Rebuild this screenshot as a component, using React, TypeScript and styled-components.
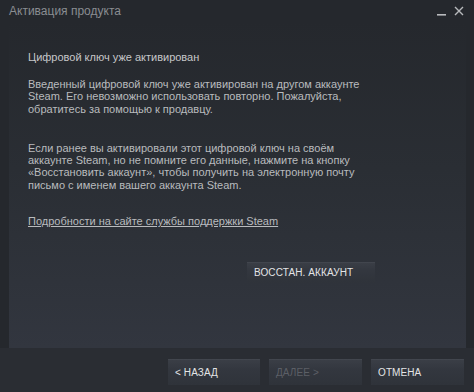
import React from "react";
import styled, { createGlobalStyle } from "styled-components";

const Global = createGlobalStyle`
  html, body { margin: 0; padding: 0; background: #24272c; }
  body { font-family: "Liberation Sans", Arial, sans-serif; }
`;

const Window = styled.div`
  width: 474px;
  height: 392px;
  display: flex;
  flex-direction: column;
  background: #25282d;
  overflow: hidden;
`;

const TitleBar = styled.div`
  height: 22px;
  display: flex;
  align-items: center;
  justify-content: space-between;
  padding: 0 10px 0 9px;
`;

const Title = styled.div`
  font-size: 12px;
  color: #8a8d92;
`;

const WinControls = styled.div`
  display: flex;
  align-items: center;
  gap: 7px;
  color: #b8babd;
`;

const Panel = styled.div`
  margin: 0 8px 0 9px;
  height: 326px;
  box-sizing: border-box;
  padding: 29px 19px 0 19px;
  background: linear-gradient(180deg, #25282d 0%, #2a2e34 45%, #32363f 100%);
  display: flex;
  flex-direction: column;
`;

const Heading = styled.div`
  font-size: 11px;
  line-height: 12px;
  color: #c6c7c9;
  margin-bottom: 15px;
`;

const Para = styled.p<{ $gap?: number }>`
  margin: 0 0 ${(p) => p.$gap ?? 0}px 0;
  font-size: 11px;
  line-height: 12.3px;
  color: #b9bbbe;
`;

const Link = styled.a`
  font-size: 11px;
  line-height: 12px;
  color: #b9bbbe;
  text-decoration: underline;
  align-self: flex-start;
`;

const RecoverRow = styled.div`
  display: flex;
  padding-left: 219px;
  margin-top: 35px;
`;

const Button = styled.button<{ $w: number; $h: number; $disabled?: boolean }>`
  width: ${(p) => p.$w}px;
  height: ${(p) => p.$h}px;
  box-sizing: border-box;
  border: none;
  padding: 0 0 0 7px;
  text-align: left;
  font-family: "Liberation Sans", Arial, sans-serif;
  font-size: 10px;
  letter-spacing: 0.1px;
  color: ${(p) => (p.$disabled ? "#5c5f66" : "#e3e4e6")};
  background: linear-gradient(180deg, #3b3f47 0%, #33373f 40%, #2f333a 100%);
  box-shadow: inset 0 1px 0 rgba(255, 255, 255, 0.04);
`;

const Footer = styled.div`
  flex: 1;
  display: flex;
  justify-content: flex-end;
  align-items: flex-start;
  gap: 9px;
  padding: 11px 10px 0 0;
  background: #2a2d33;
`;

export default function App() {
  return (
    <>
      <Global />
      <Window>
        <TitleBar>
          <Title>Активация продукта</Title>
          <WinControls>
            <svg width="10" height="10" viewBox="0 0 10 10">
              <rect x="0" y="8" width="9" height="1.6" fill="#b8babd" />
            </svg>
            <svg width="10" height="10" viewBox="0 0 10 10">
              <path d="M1 1 L9 9 M9 1 L1 9" stroke="#b8babd" strokeWidth="1.4" />
            </svg>
          </WinControls>
        </TitleBar>
        <Panel>
          <Heading>Цифровой ключ уже активирован</Heading>
          <Para $gap={27}>
            Введенный цифровой ключ уже активирован на другом аккаунте
            <br />
            Steam. Его невозможно использовать повторно. Пожалуйста,
            <br />
            обратитесь за помощью к продавцу.
          </Para>
          <Para $gap={24}>
            Если ранее вы активировали этот цифровой ключ на своём
            <br />
            аккаунте Steam, но не помните его данные, нажмите на кнопку
            <br />
            «Восстановить аккаунт», чтобы получить на электронную почту
            <br />
            письмо с именем вашего аккаунта Steam.
          </Para>
          <Link>Подробности на сайте службы поддержки Steam</Link>
          <RecoverRow>
            <Button $w={128} $h={21}>ВОССТАН. АККАУНТ</Button>
          </RecoverRow>
        </Panel>
        <Footer>
          <Button $w={92} $h={26}>&lt; НАЗАД</Button>
          <Button $w={93} $h={26} $disabled>ДАЛЕЕ &gt;</Button>
          <Button $w={93} $h={26}>ОТМЕНА</Button>
        </Footer>
      </Window>
    </>
  );
}
